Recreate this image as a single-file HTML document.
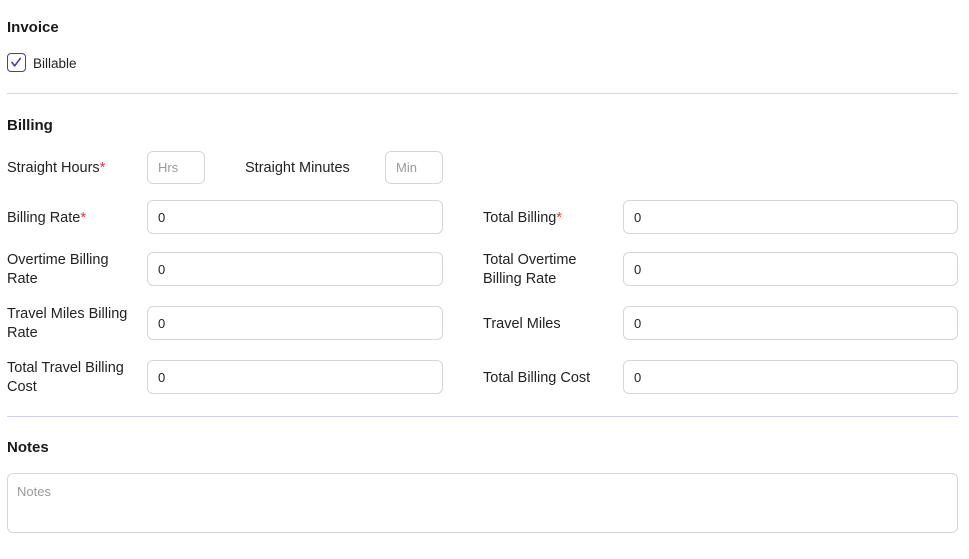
<!DOCTYPE html>
<html><head><style>
body{margin:0;background:#fff;font-family:"Liberation Sans",sans-serif;color:#1f1f1f;width:969px;height:559px;position:relative;overflow:hidden}
.a{position:absolute}
h{position:absolute;font-weight:bold;font-size:15px;color:#1a1a1a}
.l{position:absolute;font-size:14.5px;line-height:19px;color:#222;margin-top:1px}
.r{color:#e53935}
.i{position:absolute;border:1px solid #d6d6d6;border-radius:6px;box-sizing:border-box;font-size:13px;color:#222;padding-left:10px;display:flex;align-items:center}
.p{color:#9a9a9a}
.hr{position:absolute;left:7px;width:951px;height:1px;background:#d8d8d8}
</style></head><body>
<h style="left:7px;top:19px">Invoice</h>
<div class="a" style="left:7px;top:53px;width:19px;height:19px;border:1.5px solid #4a3aa8;border-radius:4px;box-sizing:border-box">
<svg width="16" height="16" viewBox="0 0 16 16" style="position:absolute;left:0;top:0"><path d="M3.5 8l3.2 3.8 6-8" fill="none" stroke="#4a3aa8" stroke-width="1.6"/></svg></div>
<div class="l" style="left:33px;top:53px;font-size:13.5px">Billable</div>
<div class="hr" style="top:93px"></div>
<h style="left:7px;top:117px">Billing</h>
<div class="l" style="left:7px;top:158px">Straight Hours<span class="r">*</span></div>
<div class="i p" style="left:147px;top:151px;width:58px;height:33px">Hrs</div>
<div class="l" style="left:245px;top:158px">Straight Minutes</div>
<div class="i p" style="left:385px;top:151px;width:58px;height:33px">Min</div>
<div class="l" style="left:7px;top:208px">Billing Rate<span class="r">*</span></div>
<div class="i" style="left:147px;top:200px;width:296px;height:34px">0</div>
<div class="l" style="left:483px;top:208px">Total Billing<span class="r">*</span></div>
<div class="i" style="left:623px;top:200px;width:335px;height:34px">0</div>
<div class="l" style="left:7px;top:250px">Overtime Billing<br>Rate</div>
<div class="i" style="left:147px;top:252px;width:296px;height:34px">0</div>
<div class="l" style="left:483px;top:250px">Total Overtime<br>Billing Rate</div>
<div class="i" style="left:623px;top:252px;width:335px;height:34px">0</div>
<div class="l" style="left:7px;top:304px">Travel Miles Billing<br>Rate</div>
<div class="i" style="left:147px;top:306px;width:296px;height:34px">0</div>
<div class="l" style="left:483px;top:314px">Travel Miles</div>
<div class="i" style="left:623px;top:306px;width:335px;height:34px">0</div>
<div class="l" style="left:7px;top:358px">Total Travel Billing<br>Cost</div>
<div class="i" style="left:147px;top:360px;width:296px;height:34px">0</div>
<div class="l" style="left:483px;top:368px">Total Billing Cost</div>
<div class="i" style="left:623px;top:360px;width:335px;height:34px">0</div>
<div class="hr" style="top:416px;background:#d4d0ec"></div>
<h style="left:7px;top:439px">Notes</h>
<div class="i" style="left:7px;top:473px;width:951px;height:60px;align-items:flex-start;padding-top:10px;padding-left:9px;color:#9a9a9a">Notes</div>
</body></html>
